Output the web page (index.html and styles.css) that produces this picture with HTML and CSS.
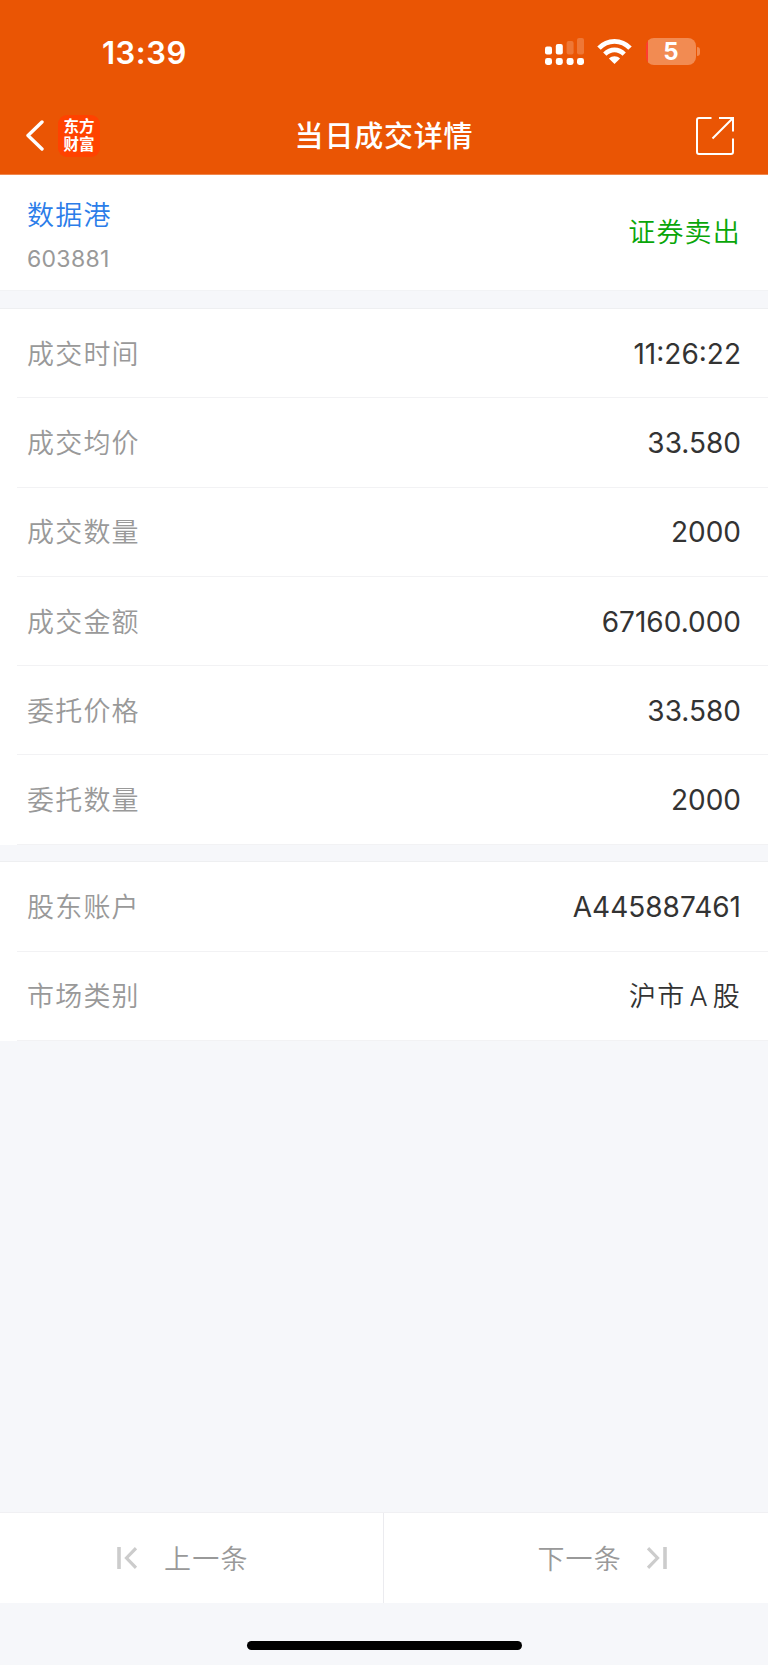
FILE: index.html
```html
<!DOCTYPE html>
<html lang="zh-CN">
<head>
    <meta charset="UTF-8">
    <meta name="viewport" content="width=device-width, initial-scale=1.0">
    <title>当日成交详情</title>
    <link rel="stylesheet" href="styles.css">
</head>
<body>
    <header class="top">
        <div class="status">
            <span class="clock">13:39</span>
            <svg class="signal" width="39" height="27" viewBox="0 0 39 27" fill="#fff">
                <rect x="0" y="8.5" width="7" height="8" rx="2"/>
                <rect x="10.8" y="6" width="7" height="10.5" rx="2"/>
                <rect x="21.6" y="3" width="7" height="13.5" rx="2" opacity=".2"/>
                <rect x="32" y="0" width="7" height="16.5" rx="2" opacity=".2"/>
                <rect x="0" y="20" width="7" height="7" rx="2.4"/>
                <rect x="10.8" y="20" width="7" height="7" rx="2.4"/>
                <rect x="21.6" y="20" width="7" height="7" rx="2.4"/>
                <rect x="32" y="20" width="7" height="7" rx="2.4"/>
            </svg>
            <svg class="wifi" width="35" height="25" viewBox="0 0 35 25">
                <path d="M2 9.2C10.5 .2 24.5 .2 33 9.2" fill="none" stroke="#fff" stroke-width="4.8"/>
                <path d="M7.8 15.2C13.5 9.4 21.5 9.4 27.2 15.2" fill="none" stroke="#fff" stroke-width="4.6"/>
                <path d="M11.9 19.4C15.2 16.4 19.8 16.4 23.1 19.4L17.5 25Z" fill="#fff"/>
            </svg>
            <div class="battery"><span>5</span></div>
            <i class="battery-tip"></i>
        </div>
        <nav class="bar">
            <svg class="back" width="18" height="31" viewBox="0 0 18 31" fill="none" stroke="#fff" stroke-width="3.4" stroke-linecap="round" stroke-linejoin="round">
                <path d="M16 2L2 15.5L16 29"/>
            </svg>
            <div class="logo">东方<br>财富</div>
            <h1>当日成交详情</h1>
            <svg class="share" width="38" height="38" viewBox="0 0 38 38" fill="none" stroke="#fff" stroke-width="2">
                <path d="M15.5 1H3Q1 1 1 3V35Q1 37 3 37H35Q37 37 37 35V21.5"/>
                <path d="M23 1H37V14.5M37 1L16.5 21.5"/>
            </svg>
        </nav>
    </header>

    <section class="stock">
        <div>
            <div class="stock-name">数据港</div>
            <div class="stock-code">603881</div>
        </div>
        <div class="side">证券卖出</div>
    </section>

    <section class="list">
        <div class="row"><span>成交时间</span><b>11:26:22</b></div>
        <div class="row"><span>成交均价</span><b>33.580</b></div>
        <div class="row"><span>成交数量</span><b>2000</b></div>
        <div class="row"><span>成交金额</span><b>67160.000</b></div>
        <div class="row"><span>委托价格</span><b>33.580</b></div>
        <div class="row"><span>委托数量</span><b>2000</b></div>
    </section>

    <section class="list">
        <div class="row"><span>股东账户</span><b>A445887461</b></div>
        <div class="row"><span>市场类别</span><b class="market">沪市 A 股</b></div>
    </section>

    <footer class="pager">
        <div class="prev">
            <svg width="20" height="22" viewBox="0 0 20 22" fill="none" stroke="#ccc">
                <path d="M2 0V22" stroke-width="3.6"/>
                <path d="M19 1.2L9.5 11L19 20.8" stroke-width="3.2"/>
            </svg>
            <span>上一条</span>
        </div>
        <div class="next">
            <span>下一条</span>
            <svg width="20" height="22" viewBox="0 0 20 22" fill="none" stroke="#ccc">
                <path d="M18 0V22" stroke-width="3.6"/>
                <path d="M1 1.2L10.5 11L1 20.8" stroke-width="3.2"/>
            </svg>
        </div>
    </footer>
    <div class="home"></div>
</body>
</html>
```
FILE: styles.css
```css
* {
    box-sizing: border-box;
}

body {
    margin: 0;
    height: 1665px;
    display: flex;
    flex-direction: column;
    background-color: #f6f7fa;
    font-family: Inter, "Noto Sans CJK SC", sans-serif;
    font-size: 28px;
    font-weight: 350;
    color: #333;
}

.top {
    height: 175px;
    background-color: #ea5504;
    border-bottom: 1px solid #f0874d;
    color: #fff;
}

.status {
    display: flex;
    align-items: center;
    height: 103px;
    padding-left: 102px;
}

.clock {
    width: 443px;
    font-size: 31px;
    font-weight: 600;
    letter-spacing: 0.5px;
    line-height: 40px;
    padding-top: 2px;
}

.wifi {
    margin-left: 13px;
}

.battery {
    width: 50px;
    height: 27px;
    margin-left: 14px;
    border-radius: 8px;
    background: linear-gradient(90deg, #ff3b30 2px, #f28b52 2px);
    text-align: center;
    font-size: 24px;
    font-weight: 700;
    line-height: 28px;
}

.battery-tip {
    width: 3px;
    height: 9px;
    margin-left: 1px;
    border-radius: 0 4px 4px 0;
    background-color: #f28b52;
}

.bar {
    display: flex;
    align-items: center;
    height: 65px;
    padding: 0 34px 0 26px;
}

.logo {
    width: 42px;
    height: 42px;
    margin-left: 14px;
    padding-top: 3px;
    border-radius: 9px;
    background-color: #ff4200;
    font-family: "Liberation Sans", "Noto Sans CJK SC", sans-serif;
    font-size: 15.5px;
    font-weight: 700;
    line-height: 18px;
    text-align: center;
}

.bar h1 {
    flex: 1;
    margin: 0;
    padding: 0 28px 3px 0;
    font-size: 29px;
    font-weight: 500;
    letter-spacing: 0.8px;
    text-align: center;
}

.stock {
    display: flex;
    align-items: center;
    justify-content: space-between;
    height: 116px;
    padding: 0 27px;
    background-color: #fff;
    border-bottom: 1px solid #f2f3f5;
}

.stock-name,
.side,
.row span,
.market,
.pager span {
    font-size: 27px;
    letter-spacing: 1.2px;
}

.stock-name {
    padding-top: 5px;
    line-height: 40px;
    color: #2b7de9;
}

.stock-code {
    margin-top: 7px;
    font-size: 23px;
    font-weight: 400;
    letter-spacing: 0.3px;
    line-height: 32px;
    color: #999;
}

.side {
    padding-bottom: 4px;
    color: #09a609;
}

.list {
    margin-top: 17px;
    border-top: 1px solid #eeeff1;
    background-color: #fff;
}

.list + .list {
    margin-top: 16.5px;
}

.row {
    display: flex;
    align-items: center;
    justify-content: space-between;
    height: 89.3px;
    margin-left: 17px;
    padding: 0 27px 0 10px;
    border-bottom: 1px solid #f2f2f4;
}

.row span {
    padding-bottom: 2px;
    color: #999;
}

.row b {
    padding-top: 1px;
    font-weight: 400;
}

.row .market {
    padding: 0 0 2px;
    font-weight: 350;
    word-spacing: -4.8px;
}

.pager {
    display: flex;
    height: 91px;
    margin-top: auto;
    border-top: 1px solid #f0f0f3;
    background-color: #fff;
    color: #999;
}

.prev,
.next {
    width: 384px;
    display: flex;
    align-items: center;
    gap: 27px;
}

.pager span {
    padding-bottom: 1px;
}

.prev {
    padding-left: 117px;
    border-right: 1px solid #ebebef;
}

.next {
    justify-content: flex-end;
    gap: 25px;
    padding-right: 101px;
}

.home {
    width: 275px;
    height: 9px;
    margin: 38px auto 15px;
    border-radius: 5px;
    background-color: #000;
}
```
